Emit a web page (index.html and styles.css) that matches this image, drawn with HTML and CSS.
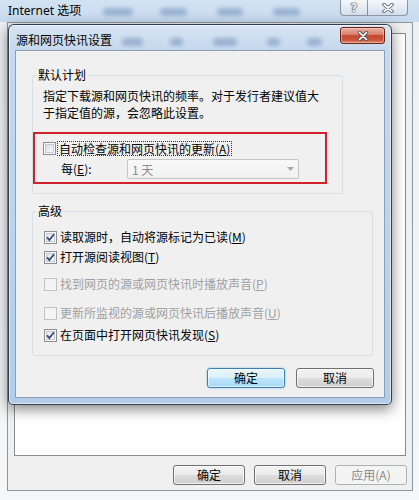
FILE: index.html
```html
<!DOCTYPE html>
<html lang="zh-CN">
<head>
<meta charset="utf-8">
<title>源和网页快讯设置</title>
<link rel="stylesheet" href="styles.css">
</head>
<body>
<div class="bgwin">
  <div class="bg-title">
    <span class="bg-title-text">Internet 选项</span>
    <div class="bg-blobs"><i class="b1"></i><i class="b2"></i><i class="b3"></i><i class="b4"></i></div>
    <div class="caption-btns">
      <span class="cap-help">?</span>
      <span class="cap-close">
        <svg width="12" height="10" viewBox="0 0 12 10"><path d="M2 1.5 L10 8.5 M10 1.5 L2 8.5" class="x-out"/><path d="M2 1.5 L10 8.5 M10 1.5 L2 8.5" class="x-in"/></svg>
      </span>
    </div>
  </div>
  <div class="bg-body">
    <div class="bg-panel"></div>
    <div class="bg-buttons">
      <button class="btn bg-btn">确定</button>
      <button class="btn bg-btn">取消</button>
      <button class="btn bg-btn btn-disabled">应用(A)</button>
    </div>
  </div>
</div>

<div class="dialog">
  <div class="dlg-title">
    <span class="dlg-title-text">源和网页快讯设置</span>
    <div class="dlg-blobs"><i class="d1"></i><i class="d2"></i><i class="d3"></i><i class="d4"></i><i class="d5"></i></div>
    <span class="dlg-close">
      <svg width="12" height="10" viewBox="0 0 12 10"><path d="M2.5 1.5 L9.5 8.5 M9.5 1.5 L2.5 8.5" class="x-out"/><path d="M2.5 1.5 L9.5 8.5 M9.5 1.5 L2.5 8.5" class="x-in"/></svg>
    </span>
  </div>
  <div class="client">
    <fieldset class="group g1">
      <legend>默认计划</legend>
      <p class="desc">指定下载源和网页快讯的频率。对于发行者建议值大<br>于指定值的源，会忽略此设置。</p>
      <div class="highlight">
        <div class="row">
          <span class="cb"></span>
          <span class="focus">自动检查源和网页快讯的更新(<u>A</u>)</span>
        </div>
        <div class="row row-every">
          <span class="every-label">每(<u>E</u>):</span>
          <div class="combo">
            <span>1 天</span>
            <svg width="7" height="4" viewBox="0 0 7 4"><polygon points="0,0 7,0 3.5,4" fill="#a9a9a9"/></svg>
          </div>
        </div>
      </div>
    </fieldset>

    <fieldset class="group g2">
      <legend>高级</legend>
      <div class="row">
        <span class="cb checked"><svg width="11" height="11" viewBox="0 0 11 11"><path d="M2 5.3 L4.4 8 L9 2.3" class="tick"/></svg></span>
        <span class="lbl">读取源时，自动将源标记为已读(<u>M</u>)</span>
      </div>
      <div class="row r2">
        <span class="cb checked"><svg width="11" height="11" viewBox="0 0 11 11"><path d="M2 5.3 L4.4 8 L9 2.3" class="tick"/></svg></span>
        <span class="lbl">打开源阅读视图(<u>T</u>)</span>
      </div>
      <div class="row r3 disabled">
        <span class="cb"></span>
        <span class="lbl">找到网页的源或网页快讯时播放声音(<u>P</u>)</span>
      </div>
      <div class="row r4 disabled">
        <span class="cb"></span>
        <span class="lbl">更新所监视的源或网页快讯后播放声音(<u>U</u>)</span>
      </div>
      <div class="row r5">
        <span class="cb checked"><svg width="11" height="11" viewBox="0 0 11 11"><path d="M2 5.3 L4.4 8 L9 2.3" class="tick"/></svg></span>
        <span class="lbl">在页面中打开网页快讯发现(<u>S</u>)</span>
      </div>
    </fieldset>

    <div class="dlg-buttons">
      <button class="btn btn-default dlg-btn">确定</button>
      <button class="btn dlg-btn">取消</button>
    </div>
  </div>
</div>
</body>
</html>
```

FILE: styles.css
```css
* { box-sizing: border-box; }

html, body {
  margin: 0;
  padding: 0;
}

body {
  width: 419px;
  height: 500px;
  overflow: hidden;
  position: relative;
  background: #f2f4f6;
  font-family: "Noto Sans CJK SC", "Noto Sans", sans-serif;
  font-size: 12px;
  color: #000;
}

/* ---------- background window ---------- */
.bgwin {
  width: 419px;
  height: 500px;
  display: flex;
  flex-direction: column;
  background: linear-gradient(180deg, #d3e3f3 0, #c7daee 22px, #eef1f4 22px, #f4f6f8 100%);
}

.bg-title {
  height: 22px;
  display: flex;
  align-items: flex-start;
  flex: none;
}

.bg-title-text {
  width: 95px;
  padding-left: 8px;
  margin-top: 4px;
  line-height: 14px;
  font-family: "Noto Sans", "Noto Sans CJK SC", sans-serif;
  font-size: 12px;
  white-space: nowrap;
}

.bg-blobs, .dlg-blobs {
  display: flex;
}

.bg-blobs { margin-top: 8px; }

.bg-blobs i, .dlg-blobs i {
  display: block;
  height: 8px;
  border-radius: 4px;
  background: rgba(105, 138, 182, 0.5);
  filter: blur(2px);
}

.bg-blobs .b1 { width: 30px; margin-left: 8px; }
.bg-blobs .b2 { width: 27px; margin-left: 27px; }
.bg-blobs .b3 { width: 26px; margin-left: 30px; }
.bg-blobs .b4 { width: 27px; margin-left: 30px; }

.caption-btns {
  margin-left: auto;
  margin-right: 11px;
  display: flex;
}

.cap-help, .cap-close {
  height: 16px;
  border: 1px solid rgba(60, 75, 95, 0.55);
  border-top: none;
  background: linear-gradient(180deg, rgba(255,255,255,0.75), rgba(214,224,236,0.7));
  display: flex;
  align-items: center;
  justify-content: center;
}

.cap-help {
  width: 28px;
  border-radius: 0 0 0 4px;
  font-family: "DejaVu Sans", sans-serif;
  font-weight: bold;
  font-size: 12px;
  color: #f6f6f6;
  text-shadow: 0 0 1px #333, 0 0 1px #333, 0 0 1px #333;
  line-height: 14px;
}

.cap-close {
  width: 40px;
  border-left: none;
  border-radius: 0 0 4px 0;
}

.x-out {
  stroke: #4b5562;
  stroke-width: 3.4;
  stroke-linecap: round;
  fill: none;
}

.x-in {
  stroke: #ffffff;
  stroke-width: 1.7;
  stroke-linecap: round;
  fill: none;
}

.bg-body {
  margin-left: 7px;
  width: 406px;
  height: 469px;
  flex: none;
  border: 1px solid #8a97a5;
  background: #f0f0f0;
  padding: 10px 5px 0 6px;
  display: flex;
  flex-direction: column;
}

.bg-panel {
  height: 423px;
  margin-right: 1px;
  border: 1px solid #898c95;
  background: #ffffff;
}

.bg-buttons {
  margin-top: 9px;
  display: flex;
  justify-content: flex-end;
  gap: 9px;
}

/* ---------- buttons ---------- */
.btn {
  font-family: "Noto Sans CJK SC", "Noto Sans", sans-serif;
  font-size: 12px;
  height: 20px;
  padding: 0;
  line-height: 18px;
  color: #000;
  border: 1px solid #707070;
  border-radius: 3px;
  background: linear-gradient(180deg, #f2f2f2 0, #ebebeb 50%, #dddddd 50%, #cfcfcf 100%);
  box-shadow: inset 0 0 0 1px rgba(255, 255, 255, 0.7);
}

.bg-btn { width: 72px; }
.dlg-btn { width: 78px; }

.btn-default {
  border-color: #3c7fb1;
  background: linear-gradient(180deg, #eaf6fd 0, #d9f0fc 50%, #bee6fd 50%, #a7d9f5 100%);
  box-shadow: inset 0 0 0 1px rgba(255, 255, 255, 0.6), 0 0 2px rgba(80, 170, 230, 0.7);
}

.btn-disabled {
  border-color: #adb2b5;
  background: #f4f4f4;
  color: #8a8a8a;
  box-shadow: none;
}

/* ---------- dialog ---------- */
.dialog {
  position: absolute;
  left: 8px;
  top: 24px;
  width: 384px;
  height: 381px;
  border: 1px solid rgba(25, 35, 50, 0.85);
  border-radius: 6px 6px 5px 5px;
  background: linear-gradient(180deg, #d6e4f2 0, #c6d9ed 25px, #bad2ea 60%, #b3cde8 100%);
  box-shadow: 0 4px 14px rgba(0, 0, 0, 0.5), inset 0 0 0 1px rgba(255, 255, 255, 0.55);
  display: flex;
  flex-direction: column;
}

.dlg-title {
  height: 25px;
  flex: none;
  display: flex;
  align-items: flex-start;
  padding: 0 6px 0 7px;
}

.dlg-title-text {
  width: 106px;
  margin-top: 8px;
  line-height: 14px;
  white-space: nowrap;
}

.dlg-blobs { margin-top: 13px; }
.dlg-blobs .d1 { width: 21px; }
.dlg-blobs .d2 { width: 13px; margin-left: 27px; }
.dlg-blobs .d3 { width: 24px; margin-left: 30px; }
.dlg-blobs .d4 { width: 13px; margin-left: 30px; }
.dlg-blobs .d5 { width: 15px; margin-left: 27px; }

.dlg-close {
  margin-left: auto;
  margin-top: 2px;
  width: 45px;
  height: 17px;
  border: 1px solid #6a2218;
  border-radius: 3px;
  background: linear-gradient(180deg, #eab0a2 0, #d97e6c 45%, #c54a33 50%, #c9553b 80%, #e08f74 100%);
  box-shadow: inset 0 0 0 1px rgba(255, 220, 210, 0.45);
  display: flex;
  align-items: center;
  justify-content: center;
}

.client {
  margin: 0 6px 6px 6px;
  height: 348px;
  flex: none;
  border: 1px solid #8a9fb8;
  background: #f0f0f0;
  display: flex;
  flex-direction: column;
  align-items: flex-start;
}

/* ---------- group boxes ---------- */
.group {
  margin: 0 0 0 16px;
  border: 1px solid #d5dfe5;
  border-radius: 3px;
  min-width: 0;
}

.group legend {
  padding: 0 2px;
  line-height: 14px;
}

.g1 {
  margin-top: 17px;
  width: 311px;
  padding: 5px 0 9px 10px;
}

.g1 legend { margin-left: -7px; }

.g2 {
  margin-top: 10px;
  width: 341px;
  padding: 12px 0 13px 11px;
}

.g2 legend { margin-left: -8px; }

.desc {
  margin: 0;
  line-height: 17px;
  white-space: nowrap;
}

.highlight {
  margin: 11px 0 0 -10px;
  width: 294px;
  height: 52px;
  border: 2px solid #d2202c;
  padding: 7px 0 0 8px;
}

.row {
  height: 14px;
  display: flex;
  align-items: center;
  white-space: nowrap;
}

.row-every {
  margin-top: 4px;
  height: 20px;
}

.every-label {
  margin-left: 18px;
  width: 66px;
  line-height: 14px;
}

.combo {
  width: 172px;
  height: 20px;
  border: 1px solid #c6c6c6;
  border-radius: 2px;
  background: linear-gradient(180deg, #f8f8f8, #f1f1f1);
  color: #8d8d8d;
  display: flex;
  align-items: center;
  justify-content: space-between;
  padding: 0 4px 0 4px;
}

.r2 { margin-top: 6px; }
.r3 { margin-top: 13px; }
.r4 { margin-top: 15px; }
.r5 { margin-top: 8px; }

.cb {
  width: 13px;
  height: 13px;
  flex: none;
  border: 1px solid #8e8f8f;
  background: linear-gradient(135deg, #cfd3d8 0, #eef0f2 60%, #fafafa 100%);
  box-shadow: inset 0 0 0 1px #f6f6f6, inset 0 0 0 2px #c5cad0;
  display: flex;
  align-items: center;
  justify-content: center;
}

.cb.checked {
  background: linear-gradient(135deg, #dcdfe3 0, #f3f4f5 60%, #ffffff 100%);
}

.tick {
  stroke: #3a4878;
  stroke-width: 1.8;
  fill: none;
}

.disabled .cb {
  border-color: #c2c2c2;
  background: #f4f4f4;
  box-shadow: none;
}

.lbl {
  margin-left: 3px;
  line-height: 14px;
}

.disabled .lbl {
  color: #a0a0a0;
}

.focus {
  margin-left: 1px;
  padding: 0 1px;
  border: 1px dotted #333;
  line-height: 13px;
}

.dlg-buttons {
  margin-top: 12px;
  align-self: stretch;
  display: flex;
  justify-content: flex-end;
  gap: 11px;
  padding-right: 10px;
}
```
